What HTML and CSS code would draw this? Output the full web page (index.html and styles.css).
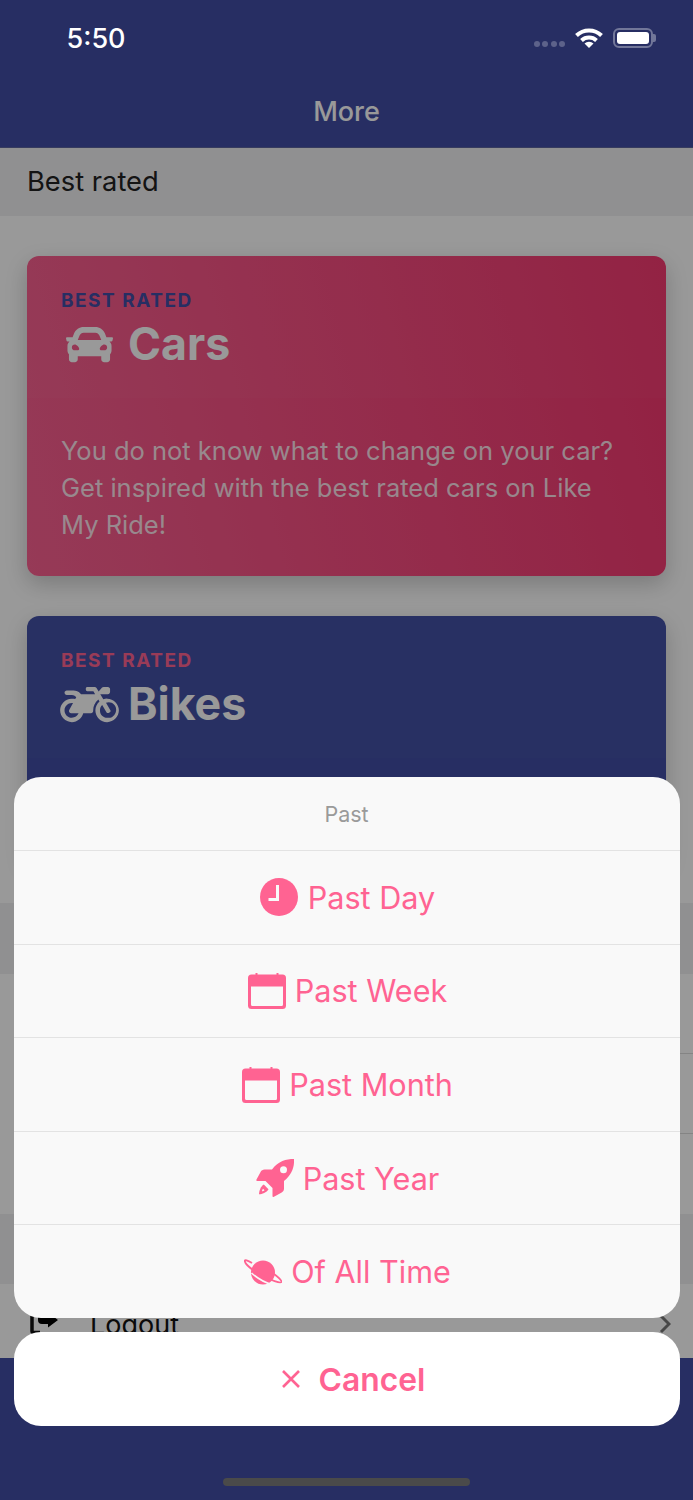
FILE: index.html
```html
<!DOCTYPE html>
<html lang="en">
<head>
    <meta charset="UTF-8">
    <meta name="viewport" content="width=device-width, initial-scale=1.0">
    <title>More</title>
    <link rel="stylesheet" href="styles.css">
</head>
<body>
    <div class="app">
        <header class="topbar">
            <h1>More</h1>
        </header>

        <main class="screen">
            <div class="section-head">Best rated</div>
            <div class="cards">
                <article class="card card-cars">
                    <div class="card-head">
                        <div class="eyebrow">BEST RATED</div>
                        <h2>
                            <svg class="icon-car" viewBox="0 0 512 512"><path d="M499.99 176h-59.87l-16.64-41.6C406.38 91.63 365.57 64 319.5 64h-127c-46.06 0-86.88 27.63-103.99 70.4L71.87 176H12.01C4.2 176-1.53 183.34.37 190.91l6 24C7.7 220.25 12.5 224 18.01 224h20.07C24.65 235.73 16 252.78 16 272v48c0 16.12 6.16 30.67 16 41.93V416c0 17.67 14.33 32 32 32h32c17.67 0 32-14.33 32-32v-32h256v32c0 17.67 14.33 32 32 32h32c17.67 0 32-14.33 32-32v-54.07c9.84-11.25 16-25.8 16-41.93v-48c0-19.22-8.65-36.27-22.07-48H494c5.51 0 10.31-3.75 11.64-9.09l6-24c1.89-7.57-3.84-14.91-11.65-14.91zm-352.06-17.83c7.29-18.22 24.94-30.17 44.57-30.17h127c19.63 0 37.28 11.95 44.57 30.17L384 208H128l19.93-49.83zM96 319.8c-19.2 0-32-12.76-32-31.9S76.8 256 96 256s48 28.71 48 47.85-28.8 15.95-48 15.95zm320 0c-19.2 0-48 3.19-48-15.95S396.8 256 416 256s32 12.76 32 31.9-12.8 31.9-32 31.9z"/></svg>
                            Cars
                        </h2>
                    </div>
                    <p>You do not know what to change on your car? Get inspired with the best rated cars on Like My Ride!</p>
                </article>
                <article class="card card-bikes">
                    <div class="card-head">
                        <div class="eyebrow">BEST RATED</div>
                        <h2>
                            <svg class="icon-bike" viewBox="0 0 640 512"><path d="M512.9 192c-14.9-.1-29.1 2.3-42.4 6.9L437.6 144H520c13.3 0 24-10.7 24-24V88c0-13.3-10.7-24-24-24h-45.3c-6.8 0-13.3 2.9-17.8 7.9l-37.5 41.7-22.8-38C392.2 68.4 384.4 64 376 64h-80c-8.8 0-16 7.2-16 16v16c0 8.8 7.2 16 16 16h66.4l19.2 32H227.9c-17.7-23.1-44.9-40-99.9-40H72.5C59 104 47.7 115 48 128.5c.2 13 10.9 23.5 24 23.5h56c24.5 0 38.7 10.9 47.8 24.8l-11.3 20.5c-13-3.9-26.9-5.7-41.3-5.2C55.9 194.5 1.6 249.6 0 317c-1.6 72.1 56.3 131 128 131 59.6 0 109.7-40.8 124-96h84.2c13.7 0 24.6-11.4 24-25.1-2.1-47.1 17.5-93.7 56.2-125l12.5 20.8c-27.6 23.7-45.1 58.9-44.8 98.2.5 69.6 57.2 126.5 126.8 127.1 71.6.7 129.8-57.5 129.2-129.1-.7-69.6-57.6-126.4-127.2-126.9zM128 400c-44.1 0-80-35.9-80-80s35.9-80 80-80c4.2 0 8.4.3 12.5 1L99 316.4c-8.8 16 2.8 35.6 21 35.6h81.3c-12.4 28.2-40.6 48-73.3 48zm388.6-.1c-45.2 2.4-82.6-33.6-82.6-79.9 0-22.6 9.4-43 24.4-57.5l47.8 79.6c4.5 7.5 14.3 10 21.9 5.4l13.7-8.2c7.6-4.5 10-14.4 5.4-21.9l-47.6-79.3c9.5-3.9 19.9-6 30.8-6 44.1 0 80 35.9 80 80 0 45.1-37.2 81.8-63.8 87.8z"/></svg>
                            Bikes
                        </h2>
                    </div>
                </article>
            </div>
            <div class="section-head"></div>
            <div class="row"></div>
            <div class="row"></div>
            <div class="row row-last"></div>
            <div class="section-head"></div>
            <div class="row row-logout">
                <svg class="icon-logout" viewBox="0 0 28 28"><path d="M9 4H3.5A1.5 1.5 0 0 0 2 5.500V21a1.500 1.500 0 0 0 1.500 1.500H10" fill="none" stroke="#111" stroke-width="3.500"/><path d="M8 7h10V2.500L28 10 18 17.500V14H12a4 4 0 0 1-4-4z"/></svg>
                <span>Logout</span>
                <svg class="chevron" viewBox="0 0 12 20"><path d="M2 2l8 8-8 8" fill="none" stroke="#777" stroke-width="3"/></svg>
            </div>
        </main>

        <nav class="tabbar"></nav>

        <!-- action sheet, sits on top of the whole page -->
        <div class="scrim">
            <div class="sheet">
                <div class="sheet-title">Past</div>
                <button class="sheet-item sheet-item-clock">
                    <svg class="sheet-icon" viewBox="0 0 38 38"><circle cx="19" cy="19" r="19"/><path d="M17.500 7v14.500H8.500" fill="none" stroke="#f9f9f9" stroke-width="3"/></svg>
                    Past Day
                </button>
                <button class="sheet-item">
                    <svg class="sheet-icon" viewBox="0 0 38 38"><use href="#calendar"/></svg>
                    Past Week
                </button>
                <button class="sheet-item">
                    <svg class="sheet-icon" viewBox="0 0 38 38"><use href="#calendar"/></svg>
                    Past Month
                </button>
                <button class="sheet-item">
                    <svg class="sheet-icon" viewBox="0 0 38 38"><path d="M38 0C30 0 22.500 2 16 10.500H8.500C6.700 10.500 5.500 11.500 4.700 12.700L.5 20.500C0 21.500.5 22 1.500 22H9.500L16.500 29V37C16.500 38 17.300 38.300 18 37.800L25.700 33.500C27 32.700 28 31.300 28 29.700V22C36 15.500 38.500 8 38 0Z"/><circle cx="27.500" cy="10.800" r="3.500" fill="#f9f9f9"/><path d="M7.800 25.500L12.500 30.200C10.500 33.800 6 35 3 35.200 3.200 32 4.400 27.500 7.800 25.500Z"/><path d="M7 29.800L8.500 31.300C7.800 32 6.800 32.200 6 32.300 6 31.400 6.300 30.500 7 29.800Z" fill="#f9f9f9"/></svg>
                    Past Year
                </button>
                <button class="sheet-item">
                    <svg class="sheet-icon" viewBox="0 0 38 38"><circle cx="19" cy="19.500" r="12"/><path d="M8 10C3.500 7 .5 6.500 .8 8 1 11 8 17 17 22 27 27.500 36.500 30.500 37.500 29 38 27.500 34 24 30 21" fill="none" stroke="#ff6392" stroke-width="1.800"/><path d="M7.500 20C13 25 22 30 29 32" fill="none" stroke="#f9f9f9" stroke-width="1.600"/></svg>
                    Of All Time
                </button>
            </div>
            <button class="sheet-cancel">
                <svg class="icon-x" viewBox="0 0 18 18"><path d="M1 1l16 16M17 1L1 17" fill="none" stroke="#ff6392" stroke-width="2.600"/></svg>
                Cancel
            </button>
        </div>

        <div class="statusbar">
            <span class="time">5:50</span>
            <div class="status-icons">
                <div class="signal"><i></i><i></i><i></i><i></i></div>
                <svg class="wifi" viewBox="0 0 28 20"><path d="M1.500 7.500A18 18 0 0 1 26.500 7.500M6.500 12.500A11 11 0 0 1 21.500 12.500" fill="none" stroke="#fff" stroke-width="4"/><path d="M14 20L9.500 15.500A6.500 6.500 0 0 1 18.500 15.500Z" fill="#fff"/></svg>
                <div class="battery"><div class="battery-fill"></div></div>
            </div>
        </div>

        <div class="home-bar"></div>
    </div>

    <svg class="defs" width="0" height="0">
        <symbol id="calendar" viewBox="0 0 38 38">
            <path d="M3.500 2.500H7.500V1H9.500V2.500H28.500V1H30.500V2.500H34.500A3.500 3.500 0 0 1 38 6V33.500A3.500 3.500 0 0 1 34.500 37H3.500A3.500 3.500 0 0 1 0 33.500V6A3.500 3.500 0 0 1 3.500 2.500ZM3 14.500V32.500A1.500 1.500 0 0 0 4.500 34H33.500A1.500 1.500 0 0 0 35 32.500V14.500Z" fill-rule="evenodd"/>
        </symbol>
    </svg>
</body>
</html>
```
FILE: styles.css
```css
* {
    box-sizing: border-box;
}
body {
    margin: 0;
    font-family: Inter, "Liberation Sans", sans-serif;
    background: #fff;
}
.app {
    position: relative;
    display: flex;
    flex-direction: column;
    height: 1500px;
    overflow: hidden;
}
.topbar {
    flex: none;
    display: flex;
    justify-content: center;
    align-items: flex-end;
    height: 148px;
    padding-bottom: 17px;
    background: #414ea5;
    border-bottom: 1px solid #5c659f;
}
.topbar h1 {
    margin: 0;
    font-size: 27px;
    line-height: 36px;
    font-weight: 500;
    color: #fff;
}
.screen {
    flex: 1;
    min-height: 0;
    overflow: hidden;
    background: #fff;
}
.section-head {
    display: flex;
    align-items: center;
    height: 70.500px;
    padding: 0 27px 2px;
    background: #f0f0f2;
    font-size: 27.300px;
    color: #222;
}
.section-head:first-child {
    height: 68px;
}
.cards {
    display: flex;
    flex-direction: column;
    gap: 40px;
    padding: 40px 27px;
}
.card {
    border-radius: 12px;
    box-shadow: 0 8px 22px rgba(0, 0, 0, 0.2);
    overflow: hidden;
}
.card-cars {
    height: 320px;
    background: linear-gradient(75deg, #fa6191, #f5376f);
}
.card-bikes {
    height: 247px;
    background: #414ea5;
}
.card-head {
    height: 142px;
    padding: 32.500px 34px 0;
    background: rgba(255, 255, 255, 0.02);
}
.eyebrow {
    font-size: 19px;
    line-height: 24px;
    font-weight: 700;
    letter-spacing: 1.500px;
}
.card-cars .eyebrow {
    color: #414ea5;
}
.card-bikes .eyebrow {
    color: #ff6392;
}
.card h2 {
    display: flex;
    align-items: center;
    gap: 10px;
    margin: 3.500px 0 0;
    font-size: 44.700px;
    line-height: 56px;
    font-weight: 700;
    color: #fff;
}
.card h2 svg {
    fill: #fff;
    flex: none;
}
.icon-car {
    width: 47px;
    height: 47px;
    margin-left: 5px;
    margin-right: 5px;
}
.icon-bike {
    width: 59px;
    height: 47px;
    margin-left: -1px;
    margin-right: -1px;
}
.card p {
    margin: 0;
    padding: 34px 34px 0;
    font-size: 25.500px;
    line-height: 37px;
    color: rgba(255, 255, 255, 0.85);
}
.row {
    height: 80px;
    margin-left: 28px;
    border-bottom: 1px solid #ddd;
}
.row-last {
    border-bottom: 0;
}
.row-logout {
    display: flex;
    align-items: center;
    gap: 32px;
    margin-left: 0;
    padding: 0 22px 0 30px;
    font-size: 27px;
    color: #111;
    border-bottom: 0;
}
.row-logout span {
    flex: 1;
}
.icon-logout {
    width: 28px;
    height: 28px;
}
.chevron {
    width: 12px;
    height: 20px;
}
.tabbar {
    flex: none;
    height: 142px;
    background: #414ea5;
}
.scrim {
    position: absolute;
    inset: 0;
    display: flex;
    flex-direction: column;
    justify-content: flex-end;
    gap: 14px;
    padding: 0 13.500px 74px;
    background: rgba(0, 0, 0, 0.4);
}
.sheet {
    border-radius: 27px;
    background: #f9f9f9;
    overflow: hidden;
}
.sheet-title {
    display: flex;
    align-items: center;
    justify-content: center;
    height: 73px;
    font-size: 21.500px;
    color: #9a9a9a;
}
.sheet-item,
.sheet-cancel {
    display: flex;
    align-items: center;
    justify-content: center;
    width: 100%;
    border: 0;
    font-family: inherit;
    color: #ff6392;
}
.sheet-item {
    gap: 9px;
    height: 93.600px;
    padding: 0 0 0 2px;
    border-top: 1px solid #e3e3e3;
    background: transparent;
    font-size: 30.600px;
}
.sheet-item-clock {
    gap: 10px;
}
.sheet-icon {
    width: 38px;
    height: 38px;
    fill: #ff6392;
}
.sheet-cancel {
    gap: 19px;
    height: 94px;
    padding: 0 0 0 14px;
    border-radius: 27px;
    background: #fff;
    font-size: 31.800px;
    font-weight: 600;
}
.icon-x {
    width: 18px;
    height: 18px;
}
.statusbar {
    position: absolute;
    top: 0;
    left: 0;
    right: 0;
    display: flex;
    justify-content: space-between;
    align-items: center;
    height: 76px;
    padding: 0 40px 0 66.500px;
    color: #fff;
}
.time {
    font-size: 27px;
    font-weight: 500;
}
.status-icons {
    display: flex;
    align-items: center;
    gap: 10px;
}
.signal {
    display: flex;
    gap: 2.500px;
    margin-top: 12px;
}
.signal i {
    width: 6px;
    height: 6px;
    border-radius: 50%;
    background: rgba(255, 255, 255, 0.25);
}
.wifi {
    width: 28px;
    height: 20px;
}
.battery {
    position: relative;
    width: 40px;
    height: 20px;
    padding: 2px;
    border: 2px solid rgba(255, 255, 255, 0.35);
    border-radius: 6px;
}
.battery::after {
    content: "";
    position: absolute;
    top: 4px;
    right: -5px;
    width: 3px;
    height: 8px;
    border-radius: 0 2px 2px 0;
    background: rgba(255, 255, 255, 0.35);
}
.battery-fill {
    height: 100%;
    border-radius: 3px;
    background: #fff;
}
.home-bar {
    position: absolute;
    left: 223px;
    bottom: 14px;
    width: 247px;
    height: 8px;
    border-radius: 4px;
    background: #4a4a4a;
}
.defs {
    position: absolute;
}
```
